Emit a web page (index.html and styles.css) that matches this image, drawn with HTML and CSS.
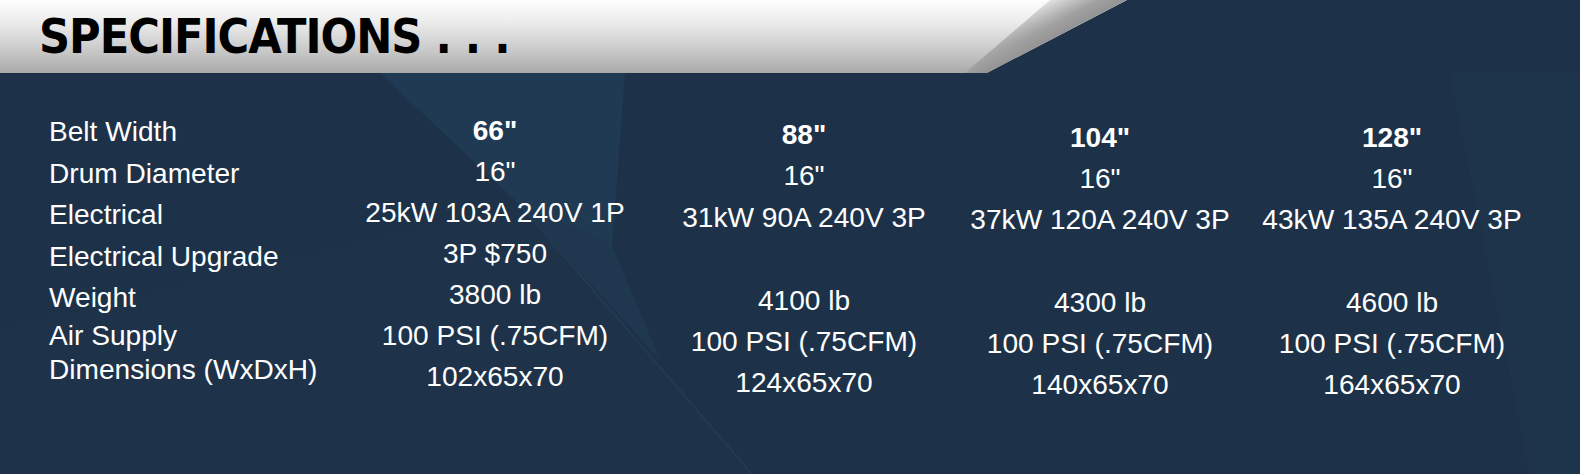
FILE: index.html
```html
<!DOCTYPE html>
<html lang="en">
<head>
<meta charset="utf-8">
<title>Specifications</title>
<link rel="stylesheet" href="styles.css">
</head>
<body>
<div class="slide">
  <header class="title-bar">
    <h1 class="title">SPECIFICATIONS . . .</h1>
    <span class="streak"></span>
  </header>
  <main class="specs">
    <div class="col labels">
      <div class="cell">Belt Width</div>
      <div class="cell">Drum Diameter</div>
      <div class="cell">Electrical</div>
      <div class="cell">Electrical Upgrade</div>
      <div class="cell">Weight</div>
      <div class="cell compact">Air Supply</div>
      <div class="cell compact">Dimensions (WxDxH)</div>
    </div>
    <div class="col values v1">
      <div class="cell head">66"</div>
      <div class="cell">16"</div>
      <div class="cell">25kW 103A 240V 1P</div>
      <div class="cell">3P $750</div>
      <div class="cell">3800 lb</div>
      <div class="cell">100 PSI (.75CFM)</div>
      <div class="cell">102x65x70</div>
    </div>
    <div class="col values v2">
      <div class="cell head">88"</div>
      <div class="cell">16"</div>
      <div class="cell">31kW 90A 240V 3P</div>
      <div class="cell"></div>
      <div class="cell">4100 lb</div>
      <div class="cell">100 PSI (.75CFM)</div>
      <div class="cell">124x65x70</div>
    </div>
    <div class="col values v3">
      <div class="cell head">104"</div>
      <div class="cell">16"</div>
      <div class="cell">37kW 120A 240V 3P</div>
      <div class="cell"></div>
      <div class="cell">4300 lb</div>
      <div class="cell">100 PSI (.75CFM)</div>
      <div class="cell">140x65x70</div>
    </div>
    <div class="col values v4">
      <div class="cell head">128"</div>
      <div class="cell">16"</div>
      <div class="cell">43kW 135A 240V 3P</div>
      <div class="cell"></div>
      <div class="cell">4600 lb</div>
      <div class="cell">100 PSI (.75CFM)</div>
      <div class="cell">164x65x70</div>
    </div>
  </main>
</div>
</body>
</html>
```

FILE: styles.css
```css
html, body {
  margin: 0;
  padding: 0;
}

body {
  width: 1580px;
  height: 474px;
  overflow: hidden;
  background-color: rgb(29, 50, 72);
}

.slide {
  width: 1580px;
  height: 474px;
  background-color: rgb(29, 50, 72);
  background-image: url("data:image/svg+xml,%3Csvg xmlns='http://www.w3.org/2000/svg' width='1580' height='474' viewBox='0 0 1580 474'%3E%3Cpolygon points='0,330 520,205 752,474 0,474' fill='rgb(30,51,74)'/%3E%3Cpolygon points='380,73 625,73 612,245 520,205' fill='rgb(32,58,83)'/%3E%3Cpolygon points='520,205 612,245 660,360' fill='rgb(31,55,79)'/%3E%3Cline x1='520' y1='205' x2='752' y2='474' stroke='rgb(35,60,85)' stroke-width='1.5'/%3E%3Cpolygon points='1450,73 1580,73 1580,474 1530,474' fill='rgb(30,52,75)'/%3E%3C/svg%3E");
  background-repeat: no-repeat;
}

.title-bar {
  position: relative;
  height: 73px;
  background: linear-gradient(#fdfdfd 0%, #ececec 30%, #c8c8c8 70%, #a9a9a9 100%);
  clip-path: polygon(0 0, 1127px 0, 987px 73px, 0 73px);
}

.title {
  margin: 0;
  padding-left: 39px;
  font-family: "DejaVu Sans Condensed", "DejaVu Sans", sans-serif;
  font-weight: bold;
  font-size: 48px;
  line-height: 72px;
  color: #000;
  letter-spacing: -1px;
}

.streak {
  position: absolute;
  left: 965px;
  top: 0;
  width: 162px;
  height: 73px;
  clip-path: polygon(85px 0, 162px 0, 22px 73px, 0 73px);
  background: linear-gradient(152deg, rgba(160, 160, 160, 0) 22%, #a0a0a0 45%, #7c7c7c 70%, #5c5c5c 100%);
}

.specs {
  display: grid;
  grid-template-columns: 301px 290px 328px 264px 320px;
  padding-left: 49px;
  font-family: "Liberation Sans", Arial, sans-serif;
  font-size: 28.1px;
  color: #fff;
}

.col {
  display: flex;
  flex-direction: column;
}

.labels {
  padding-top: 38px;
}

.labels .cell {
  height: 41.5px;
  line-height: 41.5px;
  white-space: nowrap;
}

.labels .cell.compact {
  height: 34px;
  line-height: 34px;
}

.values {
  align-items: center;
}

.values .cell {
  height: 41.2px;
  line-height: 41.2px;
  white-space: nowrap;
}

.values .head {
  font-weight: bold;
}

.v1 { padding-top: 37px; }
.v1 .cell { height: 41px; line-height: 41px; }
.v2 { padding-top: 41px; }
.v2 .cell { height: 41.4px; line-height: 41.4px; }
.v3 { padding-top: 44px; }
.v4 { padding-top: 44px; }
```
